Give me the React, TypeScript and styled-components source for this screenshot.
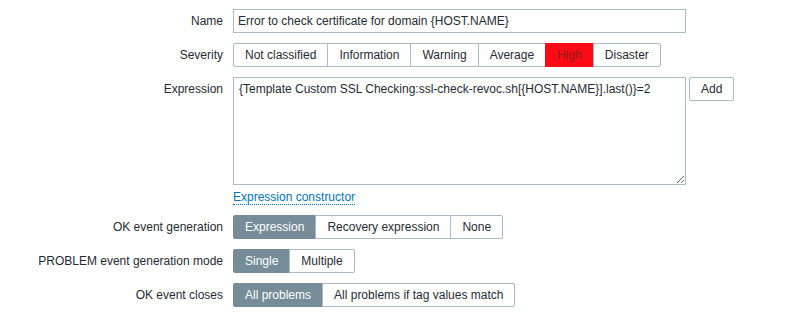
import React from 'react';
import styled, { createGlobalStyle } from 'styled-components';

const GlobalStyle = createGlobalStyle`
  html, body {
    margin: 0;
    padding: 0;
    background: #ffffff;
  }
  body {
    font-family: "Liberation Sans", Arial, sans-serif;
    font-size: 12px;
    color: #1f2c33;
  }
`;

const Form = styled.div`
  display: grid;
  grid-template-columns: 223px 1fr;
  column-gap: 10px;
  row-gap: 10px;
  padding-top: 9px;
`;

const Label = styled.div`
  text-align: right;
  line-height: 24px;
  white-space: nowrap;
`;

const Field = styled.div`
  display: flex;
  flex-direction: column;
  align-items: flex-start;
`;

const TextInput = styled.input`
  box-sizing: border-box;
  width: 453px;
  height: 24px;
  border: 1px solid #acbbc8;
  border-radius: 0;
  padding: 0 4px;
  margin: 0;
  font-family: inherit;
  font-size: 12px;
  color: #1f2c33;
  background: #ffffff;
  outline: none;
`;

const Segments = styled.ul`
  display: flex;
  list-style: none;
  margin: 0;
  padding: 0;
`;

const Segment = styled.li<{ $active?: boolean; $bg?: string; $fg?: string }>`
  box-sizing: border-box;
  height: 24px;
  line-height: 22px;
  padding: 0 11px;
  border: 1px solid ${(p) => (p.$active ? p.$bg ?? '#768d99' : '#acbbc8')};
  margin-left: -1px;
  background: ${(p) => (p.$active ? p.$bg ?? '#768d99' : '#ffffff')};
  color: ${(p) => (p.$active ? p.$fg ?? '#ffffff' : '#1f2c33')};
  white-space: nowrap;
  cursor: pointer;
  &:first-child {
    margin-left: 0;
    border-radius: 2px 0 0 2px;
  }
  &:last-child {
    border-radius: 0 2px 2px 0;
  }
`;

const ExprRow = styled.div`
  display: flex;
  align-items: flex-start;
  gap: 3px;
`;

const ExprArea = styled.textarea`
  box-sizing: border-box;
  display: block;
  width: 453px;
  height: 108px;
  border: 1px solid #acbbc8;
  border-radius: 0;
  padding: 4px 5px;
  margin: 0;
  font-family: inherit;
  font-size: 12px;
  line-height: 14px;
  color: #1f2c33;
  background: #ffffff;
  outline: none;
`;

const AltButton = styled.button`
  box-sizing: border-box;
  height: 24px;
  padding: 0 11px;
  border: 1px solid #acbbc8;
  border-radius: 2px;
  background: #ffffff;
  color: #1f2c33;
  font-family: inherit;
  font-size: 12px;
  cursor: pointer;
`;

const Link = styled.a`
  display: inline-block;
  margin-top: 5px;
  line-height: 14px;
  color: #0275b8;
  text-decoration: none;
  border-bottom: 1px dotted #0275b8;
  cursor: pointer;
`;

type Opt = { label: string; bg?: string; fg?: string };

const RadioList: React.FC<{ options: Opt[]; value: string }> = ({ options, value }) => (
  <Segments>
    {options.map((o) => (
      <Segment key={o.label} $active={o.label === value} $bg={o.bg} $fg={o.fg}>
        {o.label}
      </Segment>
    ))}
  </Segments>
);

const severities: Opt[] = [
  { label: 'Not classified' },
  { label: 'Information' },
  { label: 'Warning' },
  { label: 'Average' },
  { label: 'High', bg: '#ff0a14', fg: '#8c1a1a' },
  { label: 'Disaster' },
];

export default function App() {
  return (
    <>
      <GlobalStyle />
      <Form>
        <Label>Name</Label>
        <Field>
          <TextInput defaultValue="Error to check certificate for domain {HOST.NAME}" />
        </Field>

        <Label>Severity</Label>
        <Field>
          <RadioList options={severities} value="High" />
        </Field>

        <Label>Expression</Label>
        <Field>
          <ExprRow>
            <ExprArea defaultValue="{Template Custom SSL Checking:ssl-check-revoc.sh[{HOST.NAME}].last()}=2" />
            <AltButton>Add</AltButton>
          </ExprRow>
          <Link>Expression constructor</Link>
        </Field>

        <Label>OK event generation</Label>
        <Field>
          <RadioList
            options={[{ label: 'Expression' }, { label: 'Recovery expression' }, { label: 'None' }]}
            value="Expression"
          />
        </Field>

        <Label>PROBLEM event generation mode</Label>
        <Field>
          <RadioList options={[{ label: 'Single' }, { label: 'Multiple' }]} value="Single" />
        </Field>

        <Label>OK event closes</Label>
        <Field>
          <RadioList
            options={[{ label: 'All problems' }, { label: 'All problems if tag values match' }]}
            value="All problems"
          />
        </Field>
      </Form>
    </>
  );
}
